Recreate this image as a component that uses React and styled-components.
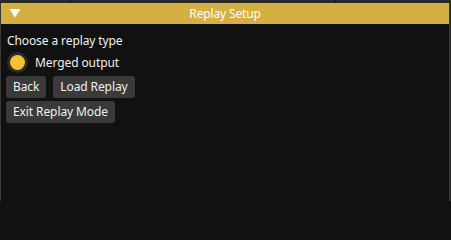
import React, { useState } from 'react';
import styled, { createGlobalStyle } from 'styled-components';

const GlobalStyle = createGlobalStyle`
  html, body {
    margin: 0;
    padding: 0;
    background: #111111;
    font-family: "Noto Sans", "Open Sans", sans-serif;
  }
`;

const Screen = styled.div`
  width: 451px;
  height: 201px;
  overflow: hidden;
  background: #262626;
  display: flex;
  flex-direction: column;
`;

// edges of other docked windows peeking above this one
const BackStrip = styled.div`
  height: 3px;
  flex-shrink: 0;
  display: flex;
  background: #2a2a2a;
`;

const BackPane = styled.div`
  width: ${p => p.w}px;
  border-right: 1px solid #161616;
  box-sizing: border-box;
`;

const Window = styled.div`
  width: 450px;
  flex: 1;
  box-sizing: border-box;
  border-left: 1px solid #383838;
  border-right: 1px solid #383838;
  background: #111111;
  display: flex;
  flex-direction: column;
`;

const TitleBar = styled.div`
  height: 21px;
  flex-shrink: 0;
  background: #d4b042;
  display: flex;
  align-items: center;
  position: relative;
  color: #ffffff;
  font-size: 12px;
  letter-spacing: -0.15px;
`;

const Collapse = styled.button`
  position: absolute;
  left: 8px;
  top: 5px;
  width: 12px;
  height: 10px;
  padding: 0;
  border: none;
  background: transparent;
  cursor: pointer;
  display: flex;
`;

const Title = styled.div`
  flex: 1;
  text-align: center;
  line-height: 21px;
`;

const Body = styled.div`
  padding: 9px 5px;
  display: flex;
  flex-direction: column;
  align-items: flex-start;
  gap: 3px;
  color: #f0f0f0;
  font-size: 12px;
  letter-spacing: -0.1px;
`;

const Label = styled.div`
  line-height: 16px;
  margin-left: 1px;
`;

const RadioRow = styled.label`
  display: flex;
  align-items: center;
  gap: 7px;
  height: 21px;
  margin-left: 1px;
  cursor: pointer;
`;

const RadioOuter = styled.span`
  width: 21px;
  height: 21px;
  border-radius: 50%;
  background: #2b2b2b;
  display: flex;
  align-items: center;
  justify-content: center;
`;

const RadioDot = styled.span`
  width: 15px;
  height: 15px;
  border-radius: 50%;
  background: ${p => (p.on ? '#f2c230' : 'transparent')};
`;

const ButtonRow = styled.div`
  display: flex;
  gap: 7px;
`;

const Button = styled.button`
  height: 22px;
  padding: 0 7px;
  border: none;
  border-radius: 3px;
  background: #3a3a3a;
  color: #f0f0f0;
  font-family: inherit;
  font-size: 12px;
  letter-spacing: -0.1px;
  line-height: 22px;
  cursor: pointer;

  &:hover {
    background: #474747;
  }
`;

const App = () => {
  const [open, setOpen] = useState(true);
  const [mode, setMode] = useState('merged');

  return (
    <>
      <GlobalStyle />
      <Screen>
        <BackStrip>
          <BackPane w={71} />
          <BackPane w={265} />
        </BackStrip>
        <Window>
          <TitleBar>
            <Collapse onClick={() => setOpen(!open)}>
              <svg width="12" height="10" viewBox="0 0 12 10">
                {open
                  ? <polygon points="0.5,1 11.5,1 6,9.5" fill="#ffffff" />
                  : <polygon points="2,0 10,5 2,10" fill="#ffffff" />}
              </svg>
            </Collapse>
            <Title>Replay Setup</Title>
          </TitleBar>
          {open && (
            <Body>
              <Label>Choose a replay type</Label>
              <RadioRow onClick={() => setMode('merged')}>
                <RadioOuter>
                  <RadioDot on={mode === 'merged'} />
                </RadioOuter>
                Merged output
              </RadioRow>
              <ButtonRow>
                <Button>Back</Button>
                <Button>Load Replay</Button>
              </ButtonRow>
              <ButtonRow>
                <Button>Exit Replay Mode</Button>
              </ButtonRow>
            </Body>
          )}
        </Window>
      </Screen>
    </>
  );
};

export default App;
